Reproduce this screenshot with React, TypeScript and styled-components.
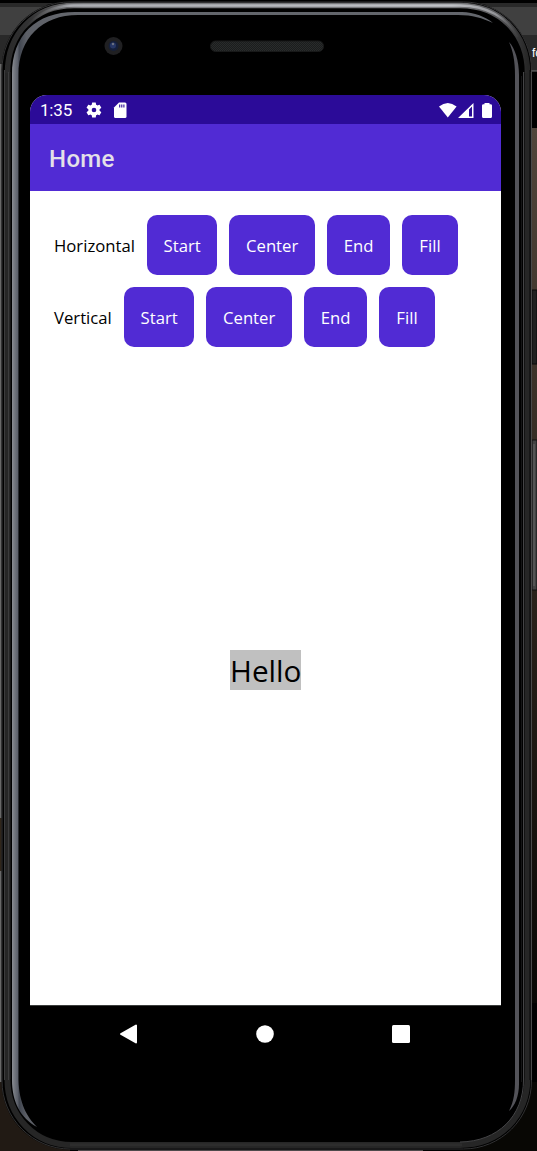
import React from "react";
import styled, { createGlobalStyle } from "styled-components";

const GlobalStyle = createGlobalStyle`
  * { box-sizing: border-box; }
  body { margin: 0; background: #000; overflow: hidden; }
`;

const Desktop = styled.main`
  position: relative;
  width: 537px;
  height: 1151px;
  overflow: hidden;
  background: #000;
`;

const Artwork = styled.svg`
  position: absolute;
  inset: 0;
`;

const Phone = styled.section`
  position: relative;
  width: 537px;
  height: 1151px;
  padding: 95px 36px 0 30px;
  display: flex;
  flex-direction: column;
`;

const Screen = styled.div`
  height: 910px;
  display: flex;
  flex-direction: column;
  border-radius: 17px 17px 0 0;
  overflow: hidden;
  background: #fff;
`;

const StatusBar = styled.header`
  height: 29px;
  flex: none;
  display: flex;
  align-items: center;
  padding: 0 9px 0 10px;
  background: #2b0b98;
  color: #fff;
`;

const Clock = styled.time`
  width: 45px;
  font: 400 17px/29px Roboto, sans-serif;
  letter-spacing: -0.2px;
  padding-top: 1px;
`;

const StatusIcons = styled.div<{ $push?: boolean }>`
  display: flex;
  align-items: center;
  margin-left: ${(p) => (p.$push ? "auto" : "0")};
`;

const AppBar = styled.div`
  height: 67px;
  flex: none;
  display: flex;
  align-items: center;
  padding: 2px 19px 0;
  background: #512bd4;
`;

const Title = styled.h1`
  margin: 0;
  font: 500 24px/30px Roboto, sans-serif;
  letter-spacing: 0.35px;
  color: #e4e0e8;
`;

const Controls = styled.div`
  display: flex;
  flex-direction: column;
  gap: 12px;
  padding: 24px 24px 0;
`;

const ControlRow = styled.div`
  height: 60px;
  display: flex;
  gap: 12px;
  align-items: center;
`;

const Label = styled.span<{ $width: number }>`
  width: ${(p) => p.$width}px;
  padding-top: 1px;
  font: 400 16.7px/24px "Open Sans", sans-serif;
  color: #000;
  white-space: nowrap;
`;

const Button = styled.button<{ $width: number }>`
  width: ${(p) => p.$width}px;
  height: 60px;
  flex: none;
  padding: 1px 0 0;
  border: 0;
  border-radius: 10px;
  background: #512bd4;
  color: #fff;
  font: 400 16.7px/24px "Open Sans", sans-serif;
`;

const Stage = styled.div`
  flex: 1;
  display: flex;
  justify-content: center;
  align-items: center;
  padding-bottom: 13px;
`;

const Greeting = styled.span`
  width: 71px;
  height: 40px;
  background: #c0c0c0;
  color: #000;
  text-align: center;
  white-space: nowrap;
  font: 400 29.7px/41px "Open Sans", sans-serif;
`;

const NavBar = styled.nav`
  height: 58px;
  display: flex;
  align-items: center;
  justify-content: space-between;
  padding: 0 91px 0 89px;
`;

const options = [
  { name: "Start", width: 70.3 },
  { name: "Center", width: 85.7 },
  { name: "End", width: 63 },
  { name: "Fill", width: 56 },
];

const rows = [
  { label: "Horizontal", width: 81 },
  { label: "Vertical", width: 58 },
];

function Bezel() {
  return (
    <Artwork width="537" height="1151" viewBox="0 0 537 1151" fill="none">
      <defs>
        <linearGradient id="rail" x1="12" x2="60" y1="0" y2="0" gradientUnits="userSpaceOnUse">
          <stop offset="0" stopColor="#8a8d93" />
          <stop offset=".06" stopColor="#70747c" />
          <stop offset=".12" stopColor="#5c606a" />
          <stop offset=".15" stopColor="#414650" />
          <stop offset=".3" stopColor="#5c5f66" />
          <stop offset="1" stopColor="#63666c" />
        </linearGradient>
        <linearGradient id="rim" x1="5" x2="528" y1="0" y2="0" gradientUnits="userSpaceOnUse">
          <stop offset="0" stopColor="#292929" />
          <stop offset=".05" stopColor="#333334" />
          <stop offset=".1" stopColor="#5e5e60" />
          <stop offset=".15" stopColor="#77787b" />
          <stop offset=".86" stopColor="#77787b" />
          <stop offset=".95" stopColor="#505052" />
          <stop offset="1" stopColor="#262626" />
        </linearGradient>
        <linearGradient id="shine" x1="20" x2="522" y1="0" y2="0" gradientUnits="userSpaceOnUse">
          <stop offset="0" stopColor="#333" stopOpacity="0" />
          <stop offset=".1" stopColor="#aaacb1" />
          <stop offset=".86" stopColor="#c0c2c7" />
          <stop offset=".95" stopColor="#929397" />
          <stop offset="1" stopColor="#444" stopOpacity="0" />
        </linearGradient>
        <linearGradient id="wall" x1="0" x2="0" y1="0" y2="1">
          <stop offset="0" stopColor="#51453b" />
          <stop offset=".45" stopColor="#30271f" />
          <stop offset="1" stopColor="#080704" />
        </linearGradient>
        <pattern id="mesh" width="2" height="2" patternUnits="userSpaceOnUse">
          <rect width="2" height="2" fill="#1b1d1d" />
          <path d="M0 0h1v1H0zM1 1h1v1H1z" fill="#292b2b" />
        </pattern>
      </defs>
      <path d="M0 7H537V35H0z" fill="#404040" />
      <path d="M0 3H537V7H0z" fill="#292929" />
      <path d="M0 35H537V71H0z" fill="#292929" />
      <path d="M531 71h6" stroke="#777" />
      <path d="M530 128h7v875h-7z" fill="url(#wall)" />
      <path d="M0 64h4v1018H0z" fill="#686868" />
      <path d="M0 818h3v53H0z" fill="#30261a" />
      <path d="M0 1082h70v69H0z" fill="#211a14" />
      <path d="M460 1082h77v69h-77z" fill="#080704" />
      <path d="M78 1150.5h345" stroke="#4e4a4b" />
      <path d="M532 290h5v74h-5z" fill="#202020" stroke="#090909" />
      <path d="M532 440h5v150h-5z" fill="#424242" stroke="#111" />
      <path d="M534 444v142" stroke="#666" />

      <rect x="1.5" y="1.5" width="530" height="1148" rx="68" fill="#000" />
      <rect x="2" y="2" width="529.5" height="1147" rx="68" stroke="#333334" />
      <path d="M7.5 72V1080C7.500 1115 34 1145 72 1145H460C500 1145 527.500 1116 527.500 1077V72" stroke="#262626" strokeWidth="6" />
      <path d="M7.500 73C7.500 34 34 5.500 74 5.500H460C500 5.500 527.500 34 527.500 73" stroke="url(#rim)" strokeWidth="5.500" />
      <path d="M26 28C38 13 53 5.500 74 5.500H460C486 5.500 507 17 518 37" stroke="url(#shine)" strokeWidth="2.500" />
      <path d="M4.500 70V1080M8.500 72V1080" stroke="#3c3c3d" />
      <path d="M10.500 72V1079M529.500 70V1080" stroke="#171717" />
      <path d="M531.500 70V1080" stroke="#49494a" />
      <path d="M70 1144.800H462" stroke="#2d2d2d" strokeWidth="3" />
      <path d="M523.500 72V1080C523.500 1116 498 1141.500 460 1142" stroke="#444446" />
      <path d="M12 75C12 35 36 12 75 12H462C474 12 486 17 493 23C482 18 473 15 458 15H78C42 15 18.500 38 18.500 75V1080C19 1103 27 1117 37 1127C20 1118 12 1101 12 1080Z" fill="url(#rail)" />
      <path d="M509 42C515 48 519 61 519 75V1084C519 1096 515 1106 509 1111C514 1101 515 1092 515 1080V76C515 61 513 51 509 42Z" fill="#535359" />
      <path d="M521.500 76V1082" stroke="#151516" />
      <circle cx="113.500" cy="46" r="9" fill="#202022" />
      <circle cx="113.500" cy="46" r="5" fill="#151f3a" />
      <circle cx="113" cy="45.500" r="3" fill="#273765" />
      <circle cx="113" cy="44" r="1.200" fill="#6b7180" />
      <rect x="210.500" y="41" width="113" height="10.500" rx="5" fill="url(#mesh)" stroke="#181919" />
      <path d="M30 1005.200h471" stroke="#555957" />
    </Artwork>
  );
}

const EdgeText = styled.span`
  position: absolute;
  left: 532px;
  top: 44px;
  color: #fff;
  font: 12px/18px "Liberation Sans", sans-serif;
  white-space: nowrap;
`;

export default function App() {
  return (
    <Desktop>
      <GlobalStyle />
      <Bezel />
      <EdgeText>fo</EdgeText>
      <Phone>
        <Screen>
          <StatusBar>
            <Clock>1:35</Clock>
            <StatusIcons>
              <svg width="18" height="18" viewBox="0 0 24 24" fill="#fff">
                <path d="M19.4 13a7.7 7.7 0 0 0 0-2l2.1-1.7a.5.5 0 0 0 .1-.6l-2-3.5a.5.5 0 0 0-.6-.2l-2.5 1a7.3 7.3 0 0 0-1.7-1L14.4 2.4a.5.5 0 0 0-.5-.4h-4a.5.5 0 0 0-.5.4L9 5a7.3 7.3 0 0 0-1.7 1l-2.5-1a.5.5 0 0 0-.6.2l-2 3.5a.5.5 0 0 0 .1.6L4.5 11a7.7 7.7 0 0 0 0 2l-2.2 1.7a.5.5 0 0 0-.1.6l2 3.5a.5.5 0 0 0 .6.2l2.5-1a7.3 7.3 0 0 0 1.700 1l.4 2.600a.5.5 0 0 0 .5.400h4a.5.5 0 0 0 .5-.4l.4-2.600a7.300 7.300 0 0 0 1.700-1l2.500 1a.5.5 0 0 0 .6-.2l2-3.500a.5.5 0 0 0-.1-.6zM12 15.100a3.100 3.100 0 1 1 0-6.200 3.100 3.100 0 0 1 0 6.200z" />
              </svg>
              <svg width="24" height="18" viewBox="0 0 24 18">
                <path d="M16 1.500H22q1.500 0 1.500 1.500v12.500q0 1.500-1.500 1.500H12.500q-1.500 0-1.500-1.500V6.500z" fill="#fff" />
                <path d="M16.700 3.500v3M18.800 3.500v3M20.900 3.500v3" stroke="#2b0b98" strokeWidth="1.100" />
              </svg>
            </StatusIcons>
            <StatusIcons $push>
              <svg width="54" height="18" viewBox="0 0 54 18" fill="#fff">
                <path d="M1 5.500Q9.800-1.500 18.600 5.500L9.800 16.500z" />
                <path fillRule="evenodd" d="M20 17L35.500 2v15zM31 8.500V15.500h3V5.500z" />
                <path d="M46.500 2h5v1.200h1q1.500 0 1.500 1.200V15.500q0 1.500-1.500 1.500h-7q-1.500 0-1.500-1.500V4.400q0-1.200 1.500-1.200h1z" />
              </svg>
            </StatusIcons>
          </StatusBar>
          <AppBar>
            <Title>Home</Title>
          </AppBar>
          <Controls>
            {rows.map((row) => (
              <ControlRow key={row.label}>
                <Label $width={row.width}>{row.label}</Label>
                {options.map((option) => (
                  <Button key={option.name} $width={option.width}>
                    {option.name}
                  </Button>
                ))}
              </ControlRow>
            ))}
          </Controls>
          <Stage>
            <Greeting>Hello</Greeting>
          </Stage>
        </Screen>
        <NavBar>
          <svg width="19" height="20" viewBox="0 0 19 20">
            <path d="M17 1.500V18.500L2 10z" fill="#fff" stroke="#fff" strokeWidth="2" strokeLinejoin="round" />
          </svg>
          <svg width="18" height="18" viewBox="0 0 18 18">
            <circle cx="9" cy="9" r="8.800" fill="#fff" />
          </svg>
          <svg width="18" height="18" viewBox="0 0 18 18">
            <rect width="18" height="18" rx="1.500" fill="#fff" />
          </svg>
        </NavBar>
      </Phone>
    </Desktop>
  );
}
